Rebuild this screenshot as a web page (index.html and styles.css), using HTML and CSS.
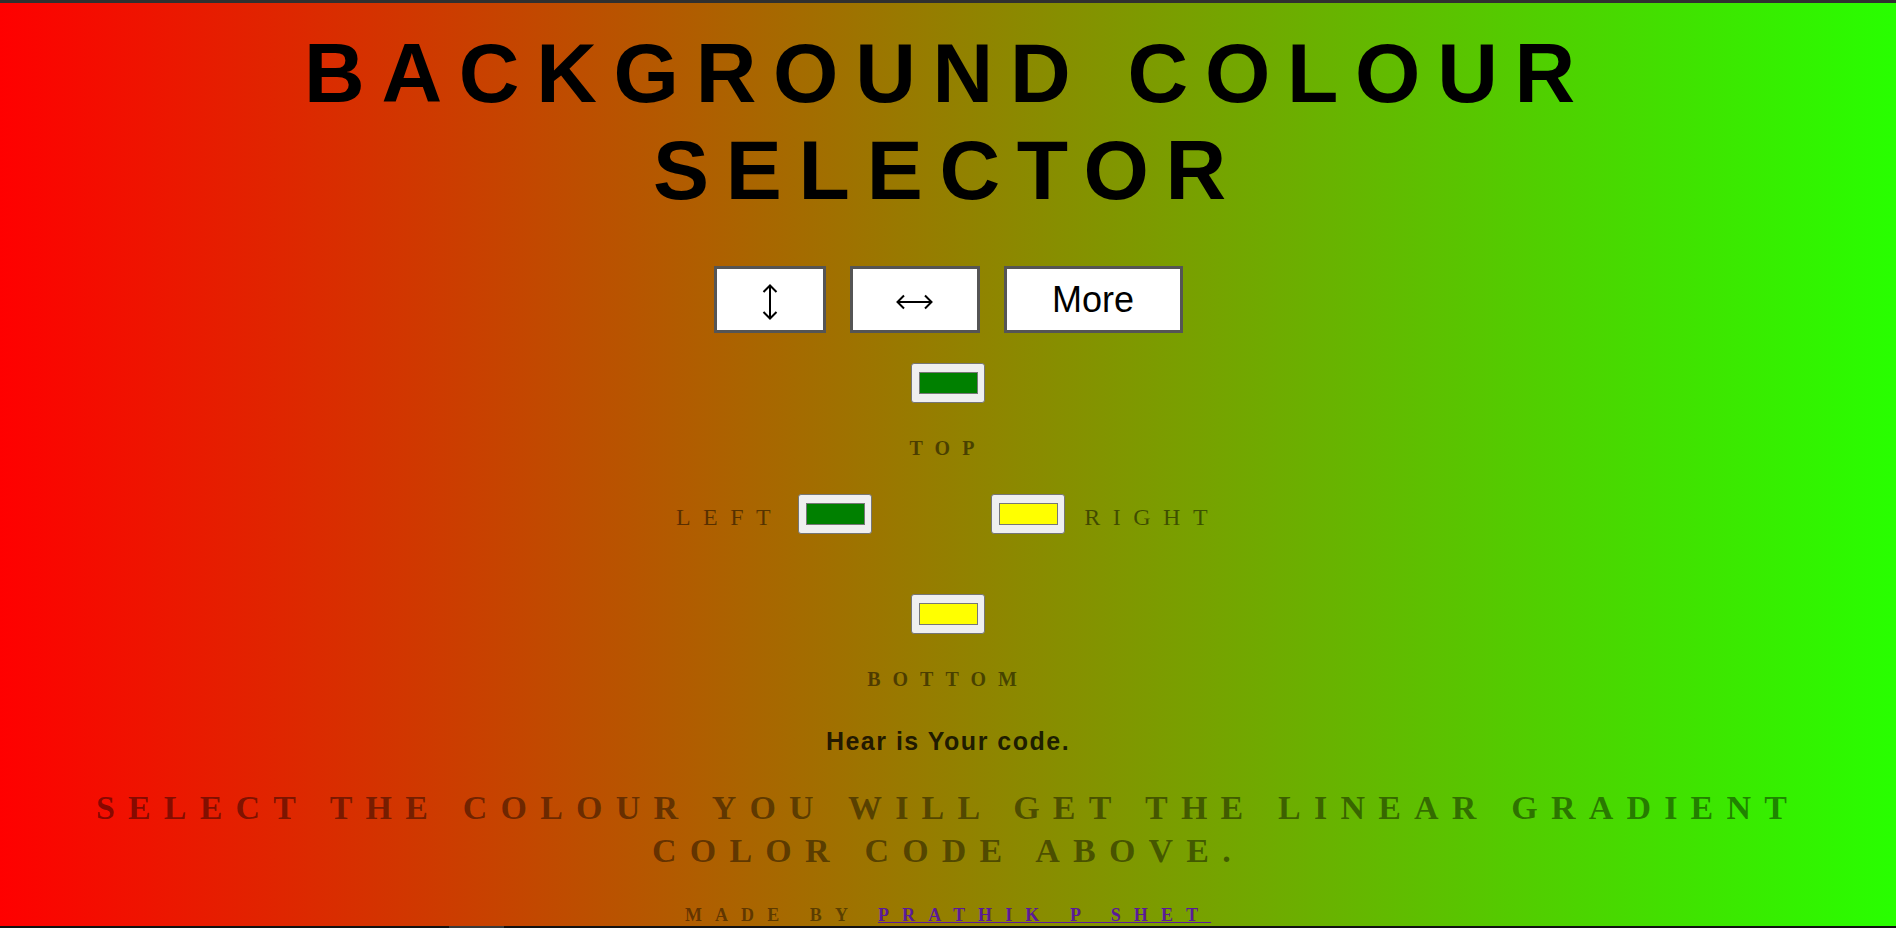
FILE: index.html
```html
<!DOCTYPE html>
<html lang="en">
<head>
<meta charset="utf-8">
<title>Background Colour Selector</title>
<link rel="stylesheet" href="styles.css">
</head>
<body>
<main class="page">
  <h1 class="title">BACKGROUND COLOUR SELECTOR</h1>
  <div class="buttons">
    <button class="btn btn-v" type="button" aria-label="Vertical gradient">
      <svg class="arrow" width="16" height="36" viewBox="0 0 16 36" aria-hidden="true"><path d="M8 1.5V34.5M1.5 8L8 1.5L14.5 8M1.5 28L8 34.5L14.5 28" fill="none" stroke="#000" stroke-width="2"/></svg>
    </button>
    <button class="btn btn-h" type="button" aria-label="Horizontal gradient">
      <svg class="arrow" width="37" height="16" viewBox="0 0 37 16" aria-hidden="true"><path d="M1.5 8H35.5M8 1.5L1.5 8L8 14.5M29 1.5L35.5 8L29 14.5" fill="none" stroke="#000" stroke-width="2"/></svg>
    </button>
    <button class="btn btn-more" type="button">More</button>
  </div>
  <input class="picker" type="color" value="#008000" aria-label="Top colour">
  <p class="label label-bold">TOP</p>
  <div class="row">
    <span class="label label-side label-left">LEFT</span>
    <input class="picker picker-left" type="color" value="#008000" aria-label="Left colour">
    <input class="picker picker-right" type="color" value="#ffff00" aria-label="Right colour">
    <span class="label label-side label-right">RIGHT</span>
  </div>
  <input class="picker picker-bottom" type="color" value="#ffff00" aria-label="Bottom colour">
  <p class="label label-bold">BOTTOM</p>
  <p class="code">Hear is Your code.</p>
  <p class="info">SELECT THE COLOUR YOU WILL GET THE LINEAR GRADIENT COLOR CODE ABOVE.</p>
  <p class="credit">MADE BY <a class="author" href="#">PRATHIK P SHET</a></p>
</main>
<div class="hscroll"><div class="hscroll-thumb"></div></div>
</body>
</html>
```
FILE: styles.css
```css
html {
  height: 100%;
}
body {
  margin: 0;
  min-height: 100%;
  border-top: 3px solid #303030;
  background: linear-gradient(to right, #ff0000, #28ff00);
  overflow: hidden;
  font-family: "Liberation Serif", "Times New Roman", serif;
}
.page {
  display: flex;
  flex-direction: column;
  align-items: center;
}
.title {
  margin: 21.5px 0 0;
  font-family: "Liberation Sans", Arial, sans-serif;
  font-weight: bold;
  font-size: 84px;
  line-height: 97px;
  letter-spacing: 16.75px;
  text-align: center;
  color: #000;
}
.buttons {
  display: flex;
  gap: 24px;
  margin-top: 47.5px;
}
.btn {
  box-sizing: border-box;
  display: flex;
  align-items: center;
  justify-content: center;
  height: 67px;
  padding: 0;
  border: 3px solid #555;
  border-radius: 0;
  background: #fff;
  color: #000;
  font-family: "Liberation Sans", Arial, sans-serif;
  font-size: 36px;
  line-height: 41px;
}
.btn-v { width: 112px; padding-top: 5px; }
.btn-h { width: 130px; padding-top: 5px; }
.btn-more { width: 179px; }
.arrow {
  display: block;
}
.picker {
  box-sizing: border-box;
  width: 74px;
  height: 40px;
  margin: 30px 0 0;
  padding: 4px 4.5px;
  border: 1px solid #767676;
  border-radius: 3px;
  background: #efefef;
}
.label {
  margin: 0;
  color: rgba(0, 0, 0, 0.5);
}
.label-bold {
  margin-top: 34px;
  font-weight: bold;
  font-size: 20px;
  line-height: 23px;
  letter-spacing: 12px;
}
.row {
  display: flex;
  align-items: flex-start;
  margin-top: 34px;
}
.row .picker {
  margin-top: 0;
}
.label-side {
  padding-top: 3px;
  font-size: 24px;
  line-height: 40px;
  letter-spacing: 12.5px;
}
.label-left { margin-right: 15px; }
.picker-left { margin-right: 119px; }
.label-right { margin-left: 19px; }
.picker-bottom {
  margin-top: 57px;
}
.code {
  margin: 36px 0 0;
  font-family: "Liberation Sans", Arial, sans-serif;
  font-weight: bold;
  font-size: 25px;
  line-height: 28px;
  letter-spacing: 1.5px;
  color: rgba(0, 0, 0, 0.8);
}
.info {
  margin: 31px 0 0;
  font-weight: bold;
  font-size: 34px;
  line-height: 43px;
  letter-spacing: 13.2px;
  text-align: center;
  color: rgba(0, 0, 0, 0.45);
}
.credit {
  margin: 33px 0 0;
  font-weight: bold;
  font-size: 18px;
  line-height: 21px;
  letter-spacing: 13.1px;
  color: rgba(0, 0, 0, 0.45);
}
.author {
  color: #5a1a99;
}
.hscroll {
  position: fixed;
  left: 0;
  right: 0;
  bottom: 0;
  height: 2px;
  background: #111;
}
.hscroll-thumb {
  width: 55px;
  height: 2px;
  margin-left: 449px;
  background: #3a3a3a;
}
```
